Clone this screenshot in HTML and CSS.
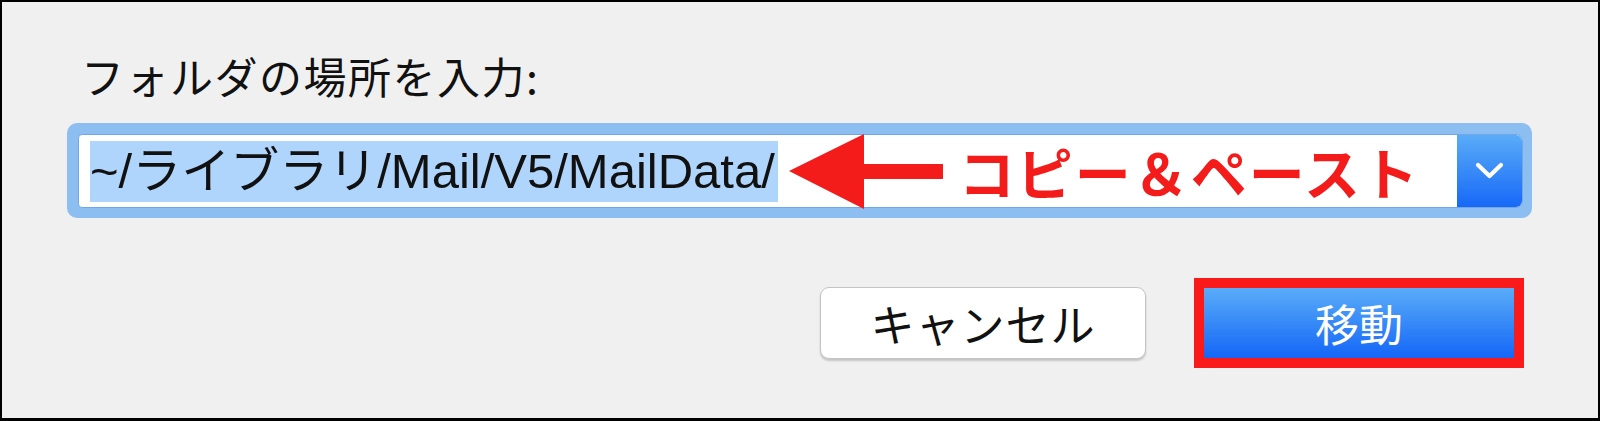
FILE: index.html
```html
<!DOCTYPE html>
<html lang="ja">
<head>
<meta charset="utf-8">
<title>フォルダの場所を入力</title>
<link rel="stylesheet" href="styles.css">
</head>
<body>
<div class="dialog">
  <div class="label">フォルダの場所を入力:</div>
  <div class="combo">
    <div class="field">
      <div class="input">
        <span class="sel">~/ライブラリ/Mail/V5/MailData/</span>
        <svg class="arrow" width="154" height="75" viewBox="0 0 154 75"><polygon points="0,37 75,0 75,30 154,30 154,45 75,45 75,75" fill="#f41b1b"/></svg>
        <span class="note">コピー＆ペースト</span>
      </div>
      <div class="drop">
        <svg width="29" height="18" viewBox="0 0 29 18"><polyline points="3,3 14.5,14 26,3" fill="none" stroke="#fff" stroke-width="4.2" stroke-linecap="round" stroke-linejoin="round"/></svg>
      </div>
    </div>
  </div>
  <div class="buttons">
    <div class="btn cancel">キャンセル</div>
    <div class="frame"><div class="btn primary">移動</div></div>
  </div>
</div>
</body>
</html>
```
FILE: styles.css
```css
html, body {
  margin: 0;
  padding: 0;
}
body {
  width: 1600px;
  height: 421px;
  overflow: hidden;
  font-family: "Noto Sans CJK JP", sans-serif;
}
.dialog {
  box-sizing: border-box;
  width: 1600px;
  height: 421px;
  background: #f0f0f0;
  border-style: solid;
  border-color: #000;
  border-width: 2px 2px 3px 2px;
  display: flex;
  flex-direction: column;
  padding: 52px 66px 0 65px;
}
.label {
  font-size: 43px;
  line-height: 43px;
  color: #111;
  margin-left: 14px;
  margin-bottom: 26px;
  letter-spacing: 1.5px;
}
.combo {
  box-sizing: border-box;
  height: 95px;
  background: #8cbef2;
  border-radius: 10px;
  padding: 11px 9px 10px 11px;
}
.field {
  box-sizing: border-box;
  height: 74px;
  background: #fff;
  border: 1px solid #72a7e6;
  border-radius: 4px 7px 7px 4px;
  display: flex;
}
.input {
  flex: 1;
  min-width: 0;
  display: flex;
  align-items: center;
  padding-left: 11px;
}
.sel {
  background: #b0d5fc;
  height: 61px;
  line-height: 61px;
  font-family: "Liberation Sans", "Noto Sans CJK JP", sans-serif;
  font-size: 49px;
  color: #111;
  padding-right: 3px;
  margin-top: 1px;
  white-space: nowrap;
}
.arrow {
  margin-left: 11px;
  flex: none;
}
.note {
  margin-left: 16px;
  font-size: 56px;
  line-height: 60px;
  font-weight: 700;
  color: #f41b1b;
  letter-spacing: 2px;
  white-space: nowrap;
}
.drop {
  width: 65px;
  flex: none;
  background: linear-gradient(#5aacf9, #1768f7);
  display: flex;
  align-items: center;
  justify-content: center;
  border-radius: 0 6px 6px 0;
}
.buttons {
  display: flex;
  justify-content: flex-end;
  align-items: center;
  gap: 48px;
  margin-top: 60px;
  padding-right: 8px;
}
.btn {
  box-sizing: border-box;
  display: flex;
  align-items: center;
  justify-content: center;
  font-size: 44px;
}
.cancel {
  width: 326px;
  height: 72px;
  background: #fff;
  border: 1px solid #c4c4c4;
  border-radius: 9px;
  box-shadow: 0 2px 2px rgba(0,0,0,0.18);
  color: #111;
  letter-spacing: 1px;
}
.frame {
  border: 10px solid #fb1a1a;
}
.primary {
  width: 310px;
  height: 70px;
  background: linear-gradient(#5aacf9, #1466f7);
  color: #fff;
}
```
